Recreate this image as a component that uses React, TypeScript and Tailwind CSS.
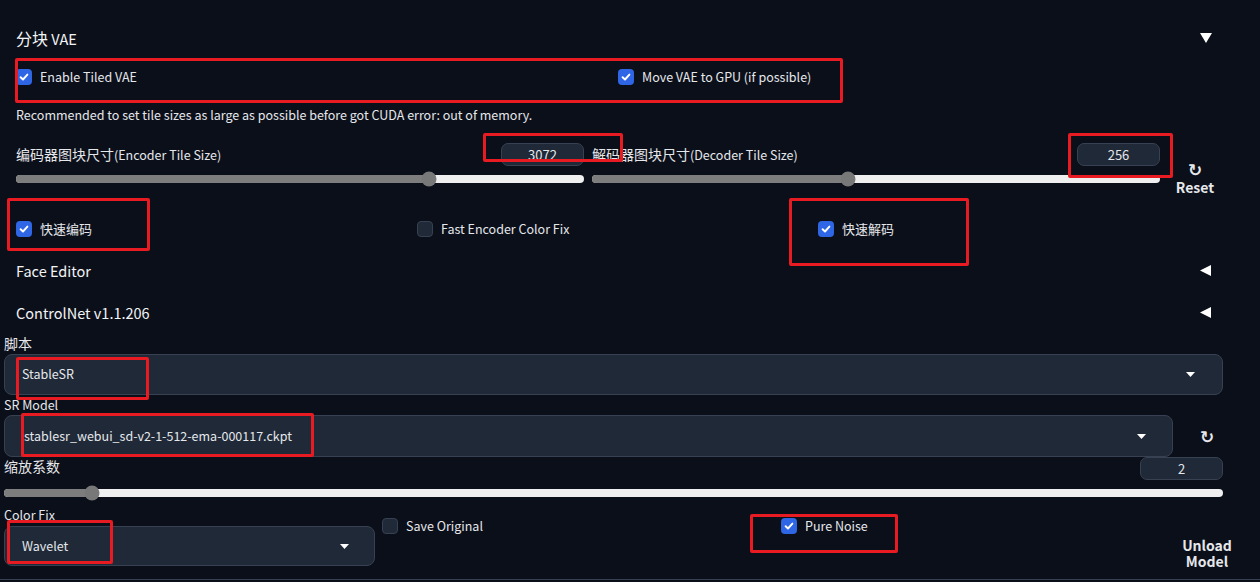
import React from "react";

const FONT = '"Noto Sans CJK SC", "Source Sans Pro", "Noto Sans", sans-serif';

const Check = ({ on }: { on: boolean }) =>
  on ? (
    <span className="flex size-[16px] shrink-0 items-center justify-center rounded-[4px] bg-[#2f66e6]">
      <svg width="10" height="10" viewBox="0 0 10 10">
        <path d="M1.6 5.2 4 7.5 8.4 2.6" fill="none" stroke="#fff" strokeWidth="1.9" strokeLinecap="round" strokeLinejoin="round" />
      </svg>
    </span>
  ) : (
    <span className="size-[16px] shrink-0 rounded-[4px] border border-[#374151] bg-[#1f2937]" />
  );

const CheckItem = ({ on, label, cjk }: { on: boolean; label: string; cjk?: boolean }) => (
  <div className="flex items-center gap-[8px] text-[#e5e7eb]">
    <Check on={on} />
    <span className={cjk ? "text-[13px]" : "text-[12.5px]"}>{label}</span>
  </div>
);

const Slider = ({ pct }: { pct: number }) => (
  <div className="relative flex h-[8px] w-full overflow-visible rounded-full bg-[#efefef]">
    <div className="h-full rounded-l-full bg-[#7d7d7d]" style={{ width: `${pct}%` }} />
    <div
      className="absolute top-1/2 size-[15px] -translate-x-1/2 -translate-y-1/2 rounded-full bg-[#787878]"
      style={{ left: `${pct}%` }}
    />
  </div>
);

const NumBox = ({ value }: { value: string }) => (
  <div className="flex h-[23px] w-[83px] shrink-0 items-end justify-center rounded-[7px] border border-[#374151] bg-[#1f2937] pb-[1px] text-[13px] leading-[18px] text-[#e5e7eb]">
    {value}
  </div>
);

const Caret = () => (
  <svg width="9" height="5" viewBox="0 0 9 5">
    <path d="M0 0h9L4.5 5z" fill="#fff" />
  </svg>
);

const Dropdown = ({ value, className }: { value: string; className: string }) => (
  <div
    className={`flex items-center justify-between rounded-[8px] border border-[#374151] bg-[#1f2937] pl-[17px] text-[12.5px] text-[#e5e7eb] ${className}`}
  >
    <span>{value}</span>
    <Caret />
  </div>
);

const Tri = ({ dir }: { dir: "down" | "left" }) => (
  <svg width="12" height="12" viewBox="0 0 12 12">
    {dir === "down" ? <path d="M0 1h12L6 11z" fill="#fff" /> : <path d="M11 0v11L0 5.5z" fill="#fff" />}
  </svg>
);

const Redbox = ({ x, y, w, h }: { x: number; y: number; w: number; h: number }) => (
  <div
    className="pointer-events-none absolute rounded-[2px] border-[3px] border-[#e81b23]"
    style={{ left: x, top: y, width: w, height: h }}
  />
);

const marks = [
  { x: 15, y: 58, w: 828, h: 45 },
  { x: 483, y: 133, w: 140, h: 29 },
  { x: 1068, y: 133, w: 105, h: 45 },
  { x: 7, y: 198, w: 143, h: 53 },
  { x: 789, y: 198, w: 180, h: 68 },
  { x: 16, y: 357, w: 133, h: 43 },
  { x: 21, y: 413, w: 293, h: 44 },
  { x: 7, y: 520, w: 106, h: 44 },
  { x: 750, y: 514, w: 148, h: 39 },
];

export default function App() {
  return (
    <div className="relative h-[582px] w-full overflow-hidden bg-[#0b0f19] text-[#e5e7eb]" style={{ fontFamily: FONT }}>
      {/* tiled vae panel */}
      <div className="pl-[16px] pr-[48px]">
        <div className="flex h-[58px] items-center justify-between pt-[18px]">
          <span className="text-[#f3f4f6]">
            <span className="text-[16px]">分块</span>
            <span className="text-[14.5px]"> VAE</span>
          </span>
          <Tri dir="down" />
        </div>
        <div className="flex h-[38px] items-center">
          <div className="w-[602px]">
            <CheckItem on label="Enable Tiled VAE" />
          </div>
          <CheckItem on label="Move VAE to GPU (if possible)" />
        </div>
        <div className="flex h-[38px] items-center text-[12.5px]">
          Recommended to set tile sizes as large as possible before got CUDA error: out of memory.
        </div>
        <div className="flex h-[74px] items-start">
          <div className="w-[568px] shrink-0 pt-[9px]">
            <div className="flex h-[23px] items-center justify-between">
              <span className="text-[14px]">
                编码器图块尺寸<span className="text-[12.5px]">(Encoder Tile Size)</span>
              </span>
              <NumBox value="3072" />
            </div>
            <div className="mt-[9px]">
              <Slider pct={72.7} />
            </div>
          </div>
          <div className="ml-[8px] w-[568px] shrink-0 pt-[9px]">
            <div className="flex h-[23px] items-center justify-between">
              <span className="text-[14px]">
                解码器图块尺寸<span className="text-[12.5px]">(Decoder Tile Size)</span>
              </span>
              <NumBox value="256" />
            </div>
            <div className="mt-[9px]">
              <Slider pct={45} />
            </div>
          </div>
          <div className="ml-[15px] flex w-[40px] shrink-0 flex-col items-center pt-[28px] font-bold leading-[17px]">
            <span className="text-[17px]" style={{ fontFamily: '"DejaVu Sans", sans-serif' }}>↻</span>
            <span className="text-[14px]">Reset</span>
          </div>
        </div>
        <div className="grid h-[42px] grid-cols-[401px_401px_1fr] items-center">
          <CheckItem on cjk label="快速编码" />
          <CheckItem on={false} label="Fast Encoder Color Fix" />
          <CheckItem on cjk label="快速解码" />
        </div>
        <div className="flex h-[42px] items-center justify-between">
          <span className="text-[14.5px] text-[#f3f4f6]">Face Editor</span>
          <Tri dir="left" />
        </div>
        <div className="flex h-[42px] items-center justify-between">
          <span className="text-[14.5px] text-[#f3f4f6]">ControlNet v1.1.206</span>
          <Tri dir="left" />
        </div>
      </div>

      {/* stablesr script */}
      <div className="pl-[4px] pr-[37px]">
        <div className="flex h-[18px] items-center text-[14px]">脚本</div>
        <Dropdown value="StableSR" className="mt-[2px] h-[41px] pr-[27px]" />
        <div className="flex h-[20px] items-center text-[12.5px]">SR Model</div>
        <div className="flex h-[42px] items-center">
          <Dropdown value="stablesr_webui_sd-v2-1-512-ema-000117.ckpt" className="h-[42px] w-[1169px] shrink-0 pl-[19px] pr-[26px]" />
          <span className="ml-[27px] pt-[4px] text-[17px] font-bold" style={{ fontFamily: '"DejaVu Sans", sans-serif' }}>↻</span>
        </div>
        <div className="flex h-[24px] items-start justify-between">
          <span className="text-[14px] leading-[18px]">缩放系数</span>
          <NumBox value="2" />
        </div>
        <div className="mt-[8px]">
          <Slider pct={7.2} />
        </div>
        <div className="mt-[8px] flex">
          <div className="w-[371px] shrink-0">
            <div className="flex h-[21px] items-center text-[12.5px]">Color Fix</div>
            <Dropdown value="Wavelet" className="h-[40px] pr-[25px]" />
          </div>
          <div className="ml-[7px] w-[399px] shrink-0 pt-[12px]">
            <CheckItem on={false} label="Save Original" />
          </div>
          <div className="w-[401px] shrink-0 pt-[12px]">
            <CheckItem on label="Pure Noise" />
          </div>
          <div className="flex w-[50px] shrink-0 flex-col items-center pt-[32px] text-[14px] font-bold leading-[16px]">
            <span>Unload</span>
            <span>Model</span>
          </div>
        </div>
      </div>
      <div className="mt-[10px] border-t border-[#374151]" />

      {marks.map((m, i) => (
        <Redbox key={i} {...m} />
      ))}
    </div>
  );
}
